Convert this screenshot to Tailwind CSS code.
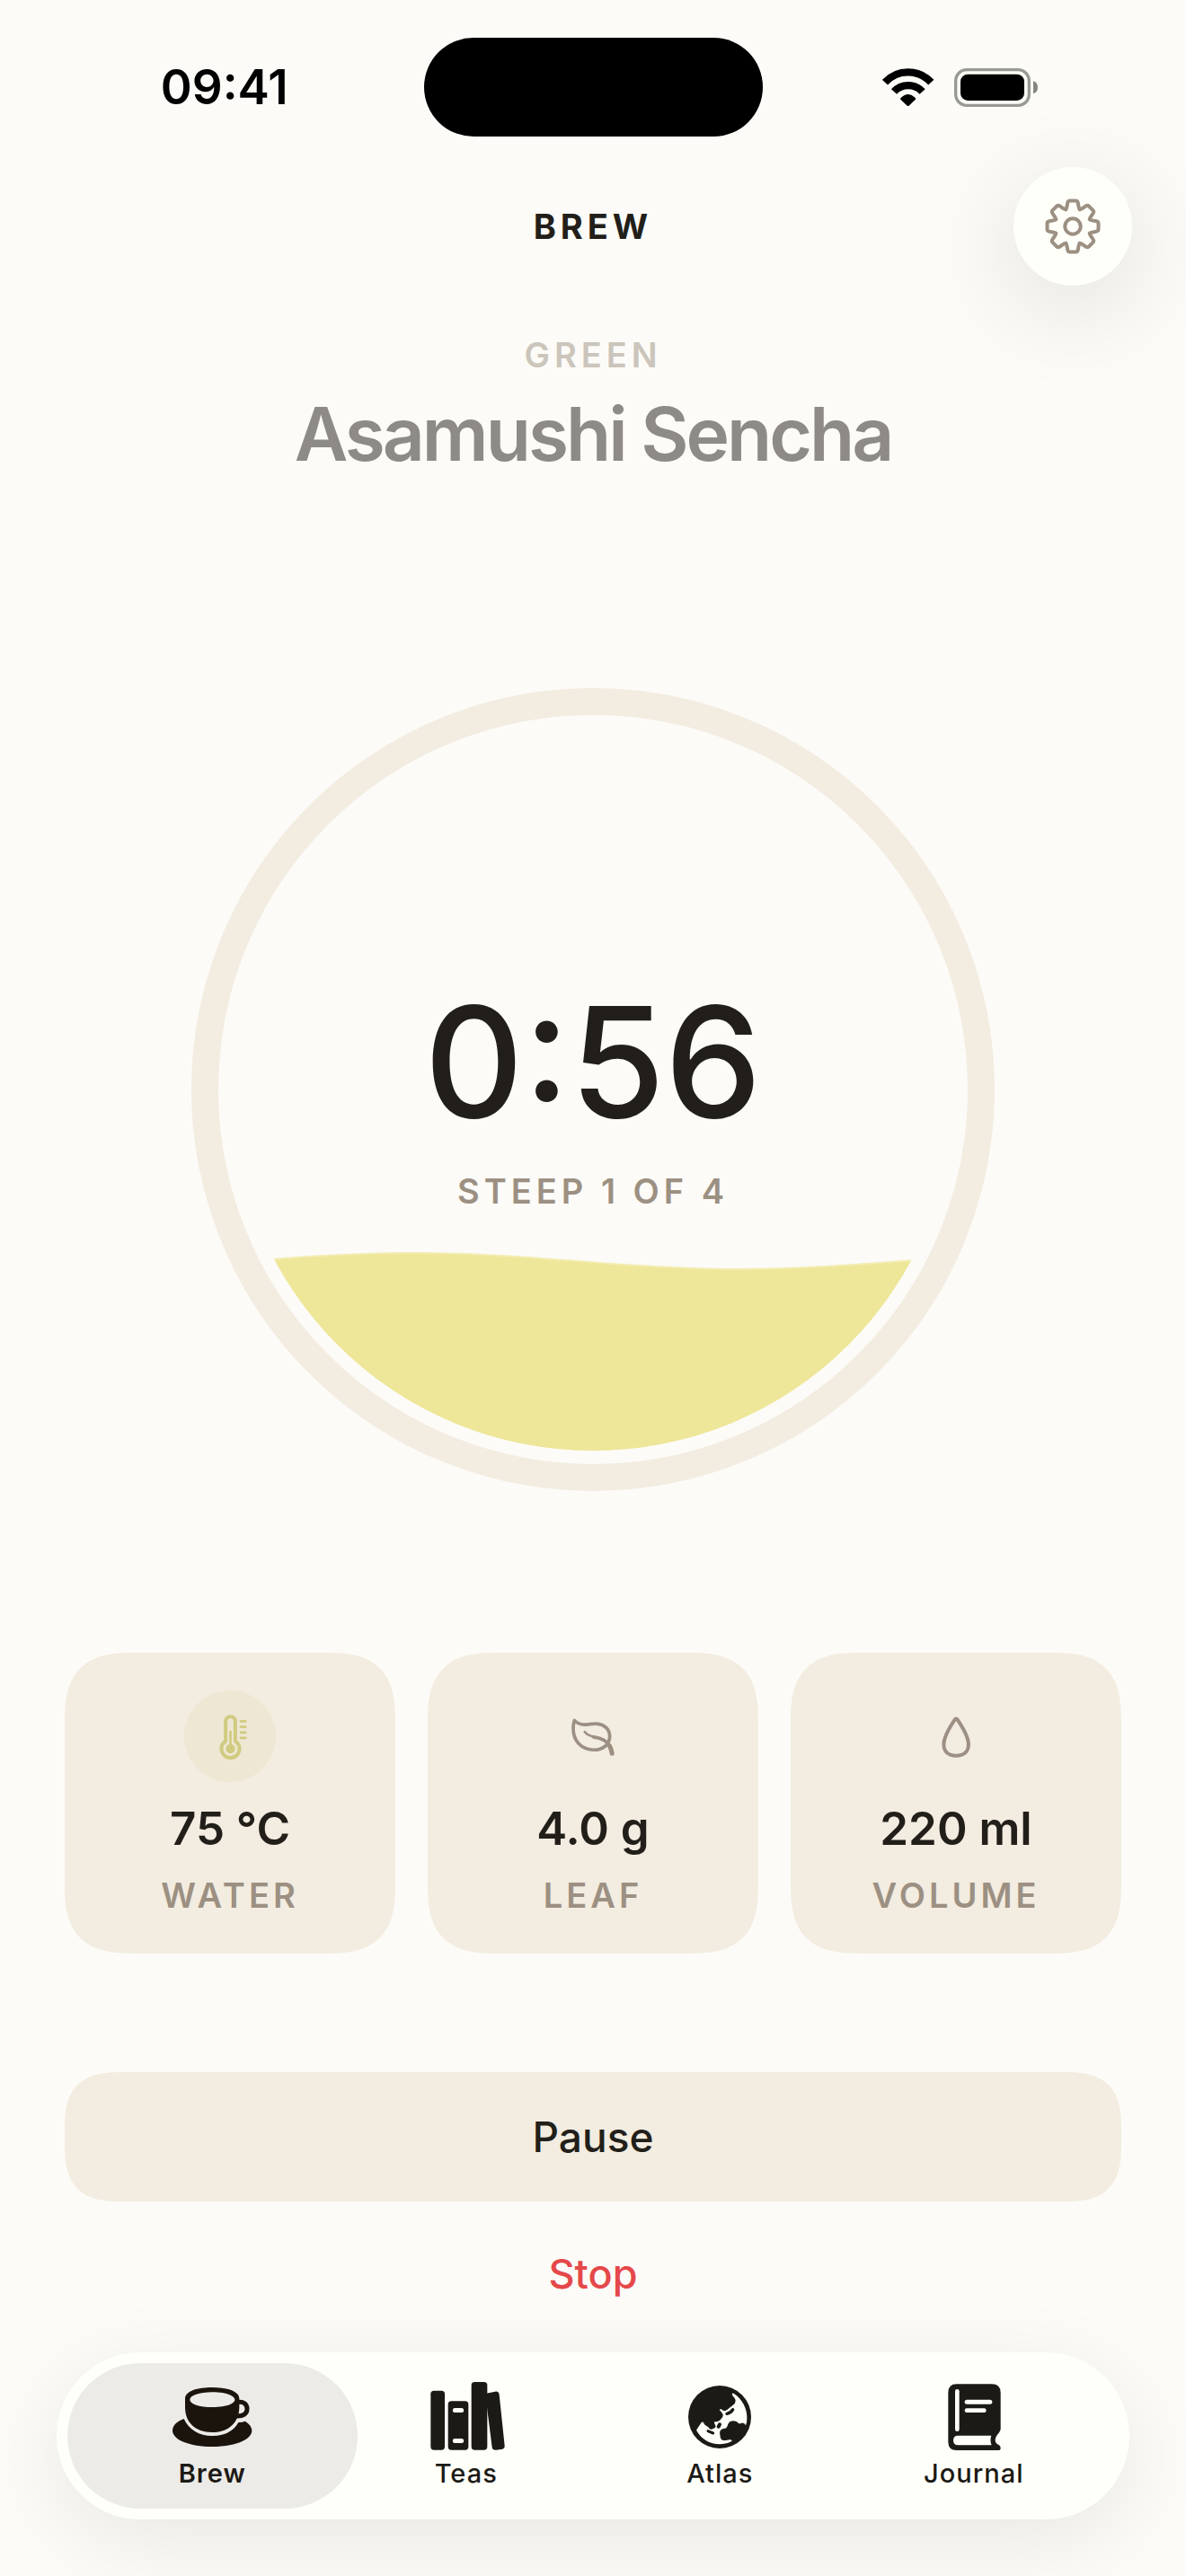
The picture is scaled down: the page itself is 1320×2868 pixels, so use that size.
<!DOCTYPE html>
<html lang="en">
<head>
<meta charset="utf-8">
<meta name="viewport" content="width=device-width, initial-scale=1">
<title>Brew</title>
<script src="https://cdn.jsdelivr.net/npm/@tailwindcss/browser@4"></script>
</head>
<body class="flex min-h-screen flex-col bg-[#fcfbf7] font-['Inter',sans-serif] text-[#221f1a]">

  <!-- Status bar -->
  <div class="grid grid-cols-[1fr_377px_1fr] items-center pt-[42px] text-black">
    <div class="pl-7 text-center text-[53px] leading-[60px] font-semibold">09:41</div>
    <div class="h-[110px] rounded-[55px] bg-black"></div>
    <div class="flex items-center justify-center gap-[22px] pr-8">
      <svg class="h-[44px] w-[58px]" viewBox="245 162 174 132" role="img" aria-label="Wi-Fi">
        <g fill="none" stroke="#000" stroke-width="25">
          <path d="M254 212A104 104 0 0 1 408 212"/>
          <path d="M284 243A65 65 0 0 1 379 243"/>
        </g>
        <path d="M306 269Q304 266 307 264Q331 240 355 264Q358 266 356 269L334 290Q331 292 328 290Z"/>
      </svg>
      <svg class="h-[43px] w-[93px]" viewBox="486 165 279 129" role="img" aria-label="Battery">
        <rect x="491" y="170" width="245" height="119" rx="37" fill="none" stroke="#999994" stroke-width="10"/>
        <rect x="507" y="185" width="213" height="88" rx="25"/>
        <path d="M750 208Q765 213 765 229T750 250Z" fill="#858581"/>
      </svg>
    </div>
  </div>

  <header class="mt-[34px] grid grid-cols-[1fr_auto_1fr] items-center px-[60px]">
    <div class="col-start-2 text-[38px] leading-[48px] font-bold tracking-[5px]">BREW</div>
    <button type="button" aria-label="Settings" class="flex size-[132px] items-center justify-center justify-self-end rounded-full bg-[#fffffa] shadow-[0_24px_112px_rgba(0,0,0,0.12)]">
      <svg class="size-[64px]" viewBox="-32 -32 64 64" fill="none" stroke="#9c9082" stroke-width="4" stroke-linecap="round" stroke-linejoin="round">
        <circle r="8.7"/>
        <path id="tooth" d="M-7.8-18.8C-6.6-20.3-6.3-23-5.8-26Q-5.3-28.5-3.3-28.5H3.3Q5.3-28.5 5.8-26C6.3-23 6.6-20.3 7.8-18.8"/>
        <use href="#tooth" transform="rotate(45)"/>
        <use href="#tooth" transform="rotate(90)"/>
        <use href="#tooth" transform="rotate(135)"/>
        <use href="#tooth" transform="rotate(180)"/>
        <use href="#tooth" transform="rotate(225)"/>
        <use href="#tooth" transform="rotate(270)"/>
        <use href="#tooth" transform="rotate(315)"/>
      </svg>
    </button>
  </header>

  <main class="flex flex-col px-[72px] pt-[52px]">
    <p class="text-center text-[38px] leading-[50px] font-semibold tracking-[5px] text-[#cbc5bb]">GREEN</p>
    <h1 class="mt-4 text-center text-[82px] leading-[96px] font-semibold tracking-[-3px] text-[#8e8b86]">Asamushi Sencha</h1>

    <!-- Steep timer -->
    <section class="relative mx-auto mt-[234px] aspect-square w-[894px] max-w-full" aria-label="Steep timer">
      <svg class="size-full" viewBox="0 0 894 894" aria-hidden="true">
        <defs><clipPath id="bowl"><circle cx="447" cy="447" r="402"/></clipPath></defs>
        <circle cx="447" cy="447" r="432" fill="none" stroke="#f3ece1" stroke-width="30"/>
        <g clip-path="url(#bowl)">
          <path fill="#f3edb4" d="M-120 646C13 646 112 628 245 628S477 646 610 646S842 628 975 628V894H-120Z"/>
          <path fill="#eee698" d="M-120 648C13 648 112 630 245 630S477 648 610 648S842 630 975 630V894H-120Z"/>
        </g>
      </svg>
      <div class="absolute inset-0 flex flex-col items-center justify-center gap-9 pt-[22px]">
        <div class="text-[171px] leading-[168px] font-medium" role="timer">0:56</div>
        <div class="text-[38px] leading-[48px] font-semibold tracking-[5px] text-[#9c9082]">STEEP 1 OF 4</div>
      </div>
    </section>

    <!-- Brew parameters -->
    <section class="mt-[180px] grid grid-cols-3 gap-9" aria-label="Brew parameters">
      <div class="flex flex-col items-center rounded-[80px] [corner-shape:superellipse(1.5)] bg-[#f3ece0] pt-[42px] pb-[41px]">
        <div class="flex size-[102px] items-center justify-center rounded-full bg-[#eee7d3]">
          <svg class="size-[51px]" viewBox="512 232 152 152" fill="none" stroke="#d0cb80" stroke-width="12" stroke-linecap="round" aria-hidden="true">
            <path stroke-linejoin="round" d="M572 323V257.500a16 16 0 0 1 32 0V323A30 30 0 1 1 572 323Z"/>
            <path stroke-width="8" d="M588 292V348"/>
            <circle cx="588" cy="348" r="15.500" fill="#d0cb80" stroke="none"/>
            <path stroke-width="8" d="M622 257H638M622 275.500H638M622 294H638M622 312H638"/>
          </svg>
        </div>
        <div class="mt-[22px] text-[51px] leading-[60px] font-semibold">75 °C</div>
        <div class="mt-5 text-[38px] leading-[48px] font-semibold tracking-[4px] text-[#9c9082]">WATER</div>
      </div>
      <div class="flex flex-col items-center rounded-[80px] [corner-shape:superellipse(1.5)] bg-[#f3ece0] pt-[42px] pb-[41px]">
        <div class="flex size-[102px] items-center justify-center">
          <svg class="size-[51px]" viewBox="524 232 152 152" fill="none" stroke="#9c9082" stroke-width="11" stroke-linecap="round" stroke-linejoin="round" aria-hidden="true">
            <path d="M537 254C545 263 554 268 570 268C584 268 594 264 610 265C638 267 654 285 654 307C654 335 630 352 602 352C560 352 533 322 533 282Q533 263 537 254Z"/>
            <path stroke-width="8" d="M571 292C578 303 590 306 605 309"/>
            <path stroke-width="11" d="M600 309C625 313 646 322 653 338"/>
            <path stroke-width="15" d="M653 338Q660 350 661.500 364"/>
          </svg>
        </div>
        <div class="mt-[22px] text-[51px] leading-[60px] font-semibold">4.0 g</div>
        <div class="mt-5 text-[38px] leading-[48px] font-semibold tracking-[4px] text-[#9c9082]">LEAF</div>
      </div>
      <div class="flex flex-col items-center rounded-[80px] [corner-shape:superellipse(1.5)] bg-[#f3ece0] pt-[42px] pb-[41px]">
        <div class="flex size-[102px] items-center justify-center">
          <svg class="size-[51px]" viewBox="536 232 152 152" fill="none" stroke="#9c9082" stroke-width="12" stroke-linejoin="round" aria-hidden="true">
            <path d="M607 251C590 276 570 308 570 334C570 358 586 371 611 371S652 358 652 334C652 308 632 276 615 251Q611 246 607 251Z"/>
          </svg>
        </div>
        <div class="mt-[22px] text-[51px] leading-[60px] font-semibold">220 ml</div>
        <div class="mt-5 text-[38px] leading-[48px] font-semibold tracking-[4px] text-[#9c9082]">VOLUME</div>
      </div>
    </section>

    <button type="button" class="mt-[132px] h-36 rounded-[66px] [corner-shape:superellipse(1.5)] bg-[#f3ece0] text-[46px] font-medium">Pause</button>
    <button type="button" class="mt-[33px] h-24 self-center px-12 text-[45px] font-medium text-[#e5484a]">Stop</button>
  </main>

  <!-- Tab bar -->
  <nav class="mx-[63px] mt-[39px] mb-[63px] grid grid-cols-4 rounded-[93px] bg-[#fffffa] px-8 py-3 text-[29px] leading-9 font-medium tracking-[1px] text-[#1c1a15] shadow-[0_24px_96px_rgba(0,0,0,0.08)]" aria-label="Tabs">
    <a href="#brew" aria-current="page" class="-mx-5 flex flex-col items-center gap-2 rounded-[81px] bg-[#edebe8] py-[21px] font-semibold">
      <svg class="h-[76px] w-[100px]" viewBox="408 156 300 228" fill="#1a140d" aria-hidden="true">
        <path fill-rule="evenodd" d="M468 212C468 186 510 174 559 174S649 186 649 212V240C649 290 615 324 558 324S468 290 468 240ZM484 215C484 229 515 240 559 240S634 229 634 215S603 190 559 190S484 201 484 215Z"/>
        <path fill="none" stroke="#1a140d" stroke-width="15" d="M646 223C664 221 675 231 675 246C675 262 662 271 640 270"/>
        <path d="M464 279C440 288 426 302 426 318C426 350 485 372 558 372S691 350 691 318C691 306 682 295 668 287Q660 291 646 291C630 320 600 336 558 336S480 315 464 279Z"/>
      </svg>
      <span>Brew</span>
    </a>
    <a href="#teas" class="flex flex-col items-center gap-2 py-[21px]">
      <svg class="h-[76px] w-[100px]" viewBox="171 156 300 228" fill="#1c1a15" aria-hidden="true">
        <rect x="202" y="185" width="47" height="198" rx="11"/>
        <path fill-rule="evenodd" d="M271 220H317Q328 220 328 231V372Q328 383 317 383H271Q260 383 260 372V231Q260 220 271 220ZM283 243A7.500 7.500 0 0 0 283 258H305A7.500 7.500 0 0 0 305 243ZM283 345A7.500 7.500 0 0 0 283 360H305A7.500 7.500 0 0 0 305 345Z"/>
        <rect x="338" y="156" width="53" height="227" rx="11"/>
        <path d="M388 194L417 188Q430 186 431 199L449 369Q450 377 442 380L421 383Q408 384 407 374L388 225Z"/>
      </svg>
      <span>Teas</span>
    </a>
    <a href="#atlas" class="flex flex-col items-center gap-2 py-[21px]">
      <svg class="h-[76px] w-[100px]" viewBox="-150 -117 300 228" fill="#1c1a15" aria-hidden="true">
        <circle r="105"/>
        <g fill="#fffffa">
          <path d="M41-77Q43-82 49-77C74-60 91-30 91 0C91 11 91 18 87 28Q83 18 73 20Q66 23 62 20C53 11 38 10 30 20C25 28 26 36 17 38C2 40-1 48 1 58C2 68 3 78 13 78C23 79 30 73 40 77Q43 80 38 82C25 89 13 91 0 91C-33 91-62 74-77 46Q-78 42-75 39L-63 21Q-57 13-53 20C-50 29-42 29-38 34C-34 41-30 43-22 39Q-14 37-13 31Q-15 26-18 20Q-20 16-14 16C-4 15 3 11 7 3C11-1 13-6 9-12Q4-18 0-23Q-1-28 5-26Q12-19 19-21C31-27 35-33 46-41Q52-45 53-54C53-61 48-66 44-70Z"/>
        </g>
        <g fill="none" stroke="#1c1a15" stroke-linecap="round">
          <path stroke-width="10" d="M24-11Q38-14 44-25"/>
          <path stroke-width="12" d="M-4 32L0 25"/>
          <path stroke-width="9" d="M-39 47L-22 54"/>
        </g>
      </svg>
      <span>Atlas</span>
    </a>
    <a href="#journal" class="flex flex-col items-center gap-2 py-[21px]">
      <svg class="h-[76px] w-[100px]" viewBox="-150 156 300 228" fill="#1c1a15" aria-hidden="true">
        <path d="M-58 163H60Q89 163 89 192V313Q89 320 83 326Q71 339 71 350Q71 361 84 367Q89 371 89 377Q89 384 81 384H-58Q-86 384-86 356V192Q-86 163-58 163Z"/>
        <g fill="#fffffa">
          <path d="M-53 335H58Q52 351 59 367H-53Q-69 367-69 351T-53 335Z"/>
          <rect x="-63" y="180" width="14" height="141" rx="7"/>
          <rect x="-31" y="215" width="92" height="15" rx="7.500"/>
          <rect x="-31" y="244" width="72" height="14" rx="7"/>
        </g>
      </svg>
      <span>Journal</span>
    </a>
  </nav>
</body>
</html>
